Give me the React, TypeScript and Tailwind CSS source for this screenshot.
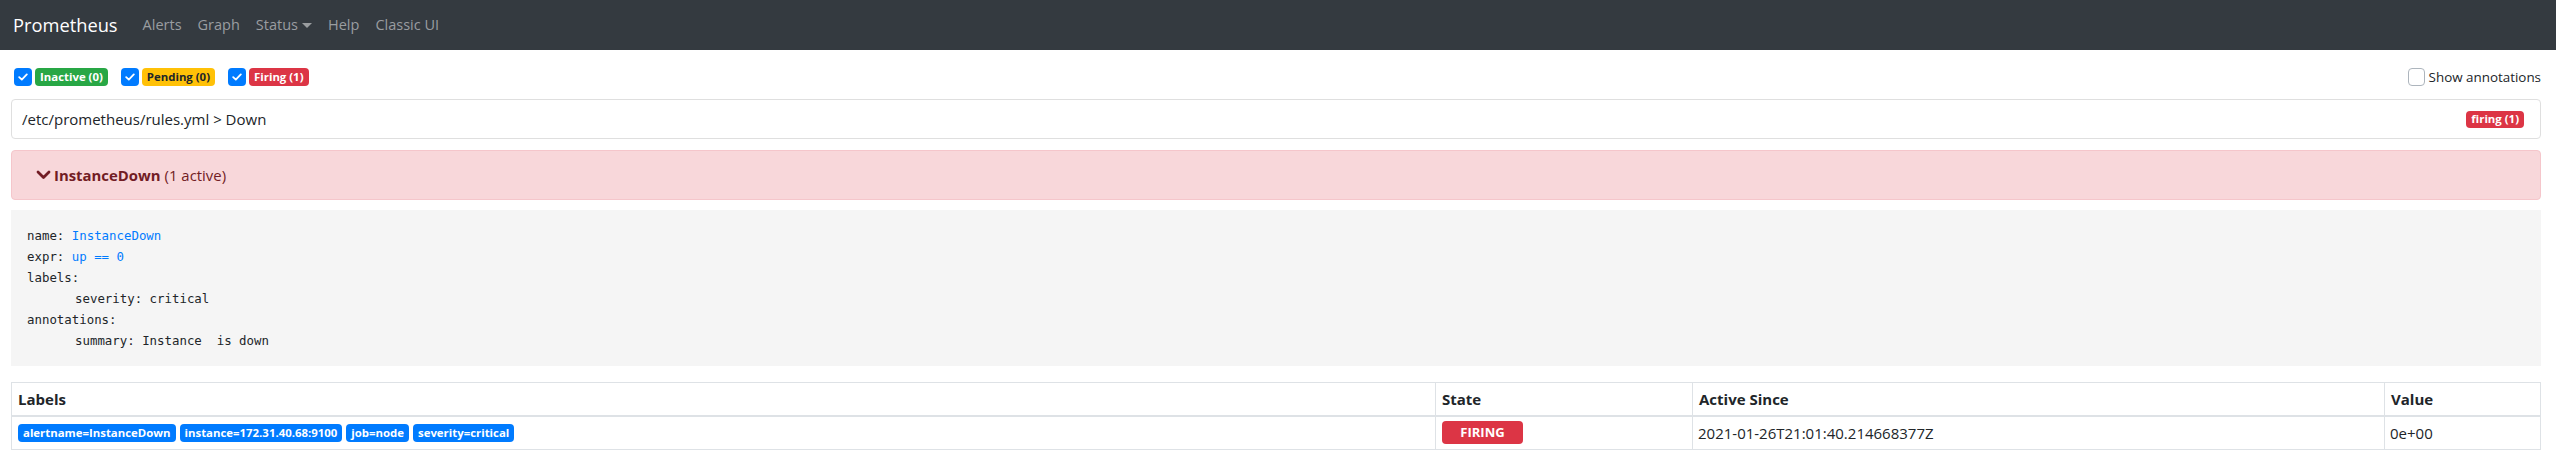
import React from "react";

function Check({ on }: { on: boolean }) {
  if (!on) {
    return <span className="block h-[18px] w-[17px] rounded-[4px] border border-[#adb5bd] bg-white" />;
  }
  return (
    <span className="flex h-[18px] w-[18px] items-center justify-center rounded-[4px] bg-[#007bff]">
      <svg width="10" height="8" viewBox="0 0 10 8" fill="none">
        <path d="M1.2 4.2 3.8 6.6 8.8 1.4" stroke="white" strokeWidth="1.8" strokeLinecap="round" strokeLinejoin="round" />
      </svg>
    </span>
  );
}

function Badge({ color, children }: { color: string; children: React.ReactNode }) {
  return (
    <span className={`flex h-[18px] items-center rounded-[4px] px-[5px] text-[11.4px] font-bold leading-none ${color}`}>
      {children}
    </span>
  );
}

const filters = [
  { label: "Inactive (0)", color: "bg-[#28a745] text-white" },
  { label: "Pending (0)", color: "bg-[#ffc107] text-[#212529]" },
  { label: "Firing (1)", color: "bg-[#dc3545] text-white" },
];

const labels = ["alertname=InstanceDown", "instance=172.31.40.68:9100", "job=node", "severity=critical"];

export default function App() {
  return (
    <div className="min-h-screen bg-white font-['Open_Sans',sans-serif] text-[#212529]">
      <nav className="flex h-[50px] items-center bg-[#343a40] pl-[13px]">
        <span className="text-[18.3px] text-white">Prometheus</span>
        <div className="ml-[25px] flex items-center gap-[16px] text-[14.5px] text-[#9a9da0]">
          <span>Alerts</span>
          <span>Graph</span>
          <span className="flex items-center gap-[4px]">
            Status
            <span className="h-0 w-0 border-x-[5px] border-t-[5px] border-x-transparent border-t-[#9a9da0]" />
          </span>
          <span>Help</span>
          <span>Classic UI</span>
        </div>
      </nav>

      <main className="pl-[11px] pr-[15px] pt-[18px]">
        <div className="flex h-[18px] items-center">
          <div className="flex items-center gap-[13px] pl-[3px]">
            {filters.map((f) => (
              <label key={f.label} className="flex items-center gap-[3px]">
                <Check on />
                <Badge color={f.color}>{f.label}</Badge>
              </label>
            ))}
          </div>
          <label className="ml-auto flex items-center gap-[4px] text-[13.4px]">
            <Check on={false} />
            Show annotations
          </label>
        </div>

        <div className="mt-[13px] flex h-[40px] items-center justify-between rounded-[4px] border border-[#dfdfdf] pl-[10px] pr-[16px] text-[15px]">
          <span>/etc/prometheus/rules.yml &gt; Down</span>
          <span className="flex h-[17px] items-center rounded-[4px] bg-[#dc3545] px-[5px] text-[11.4px] font-bold leading-none text-white">
            firing (1)
          </span>
        </div>

        <div className="mt-[11px] flex h-[50px] items-center rounded-[4px] border border-[#f5c6cb] bg-[#f8d7da] pl-[24px] text-[14.9px] text-[#721c24]">
          <svg width="15" height="10" viewBox="0 0 15 10" className="mr-[3px]">
            <path d="M2 2 7.5 7.5 13 2" fill="none" stroke="#721c24" strokeWidth="2.8" strokeLinecap="round" strokeLinejoin="round" />
          </svg>
          <span className="font-bold">InstanceDown</span>
          <span className="ml-[4px]">(1 active)</span>
        </div>

        <pre className="mt-[10px] bg-[#f5f5f5] py-[15px] pl-[16px] font-['DejaVu_Sans_Mono',monospace] text-[12.4px] leading-[21px] text-[#212529]">
          <div>
            name: <span className="text-[#007bff]">InstanceDown</span>
          </div>
          <div>
            expr: <span className="text-[#007bff]">up == 0</span>
          </div>
          <div>labels:</div>
          <div className="pl-[48px]">severity: critical</div>
          <div>annotations:</div>
          <div className="pl-[48px]">summary: Instance  is down</div>
        </pre>

        <table className="mt-[16px] w-full table-fixed border-collapse border border-[#dee2e6] text-[15px]">
          <colgroup>
            <col className="w-[1424px]" />
            <col className="w-[257px]" />
            <col className="w-[692px]" />
            <col />
          </colgroup>
          <thead>
            <tr className="h-[33px] border-b-2 border-[#dee2e6] text-left">
              <th className="border-r border-[#dee2e6] px-[6px] font-bold">Labels</th>
              <th className="border-r border-[#dee2e6] px-[6px] font-bold">State</th>
              <th className="border-r border-[#dee2e6] px-[6px] font-bold">Active Since</th>
              <th className="px-[6px] font-bold">Value</th>
            </tr>
          </thead>
          <tbody>
            <tr className="h-[34px]">
              <td className="border-r border-[#dee2e6] px-[6px]">
                <div className="flex gap-[4px]">
                  {labels.map((l) => (
                    <Badge key={l} color="bg-[#007bff] text-white">
                      {l}
                    </Badge>
                  ))}
                </div>
              </td>
              <td className="border-r border-[#dee2e6] px-[6px]">
                <span className="flex h-[23px] w-[81px] items-center justify-center rounded-[4px] bg-[#dc3545] text-[13px] font-bold text-white">
                  FIRING
                </span>
              </td>
              <td className="border-r border-[#dee2e6] px-[5px]">2021-01-26T21:01:40.214668377Z</td>
              <td className="px-[5px]">0e+00</td>
            </tr>
          </tbody>
        </table>
      </main>
    </div>
  );
}
